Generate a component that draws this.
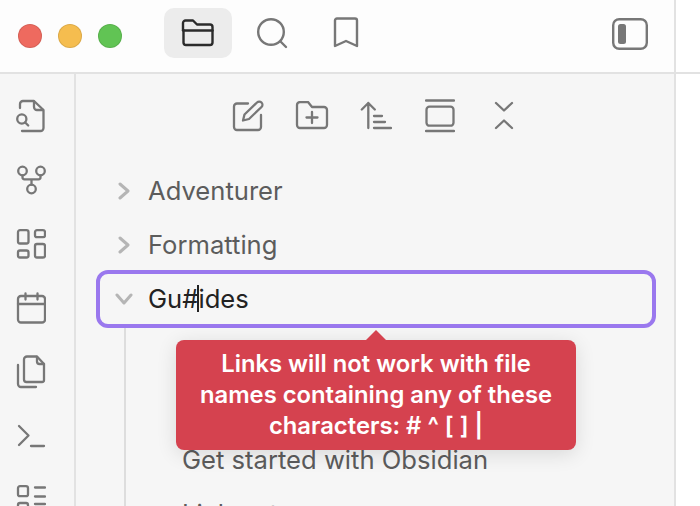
<div class="app">
	<header class="titlebar">
		<div class="traffic">
			<span class="dot red"></span>
			<span class="dot yellow"></span>
			<span class="dot green"></span>
		</div>
		<div class="tabs">
			<button class="tab active" aria-label="Files">
				<svg width="34" height="30" viewBox="0 0 34 30" fill="none" stroke="#2b2b2b" stroke-width="2.4" stroke-linejoin="round" stroke-linecap="round">
					<path d="M2 12V5a2.500 2.500 0 0 1 2.500-2.500h7.500l4 4h13a2.500 2.500 0 0 1 2.500 2.500v15.500a2.500 2.500 0 0 1-2.500 2.500h-24a2.500 2.500 0 0 1-2.500-2.500V12" />
					<path d="M2 12.500h29.500" />
				</svg>
			</button>
			<button class="tab" aria-label="Search">
				<svg width="34" height="34" viewBox="0 0 34 34" fill="none" stroke="#777" stroke-width="2.400" stroke-linecap="round">
					<circle cx="16" cy="16" r="12.800" />
					<path d="M25.500 25.500l5.500 5.500" />
				</svg>
			</button>
			<button class="tab" aria-label="Bookmarks">
				<svg width="28" height="34" viewBox="0 0 28 34" fill="none" stroke="#777" stroke-width="2.400" stroke-linejoin="round" stroke-linecap="round">
					<path d="M3 4.500a2 2 0 0 1 2-2h18a2 2 0 0 1 2 2V30l-11-5-11 5z" />
				</svg>
			</button>
		</div>
		<button class="sidebar-toggle" aria-label="Toggle sidebar">
			<svg width="36" height="34" viewBox="0 0 36 34" fill="none">
				<rect x="1.200" y="2.200" width="33.600" height="29.600" rx="6" stroke="#777" stroke-width="2.400" />
				<rect x="6" y="7" width="8" height="20" rx="2.500" fill="#777" />
			</svg>
		</button>
		<div class="edge"></div>
	</header>

	<div class="body">
		<nav class="ribbon">
			<div class="ribbon-item">
				<svg width="30" height="34" viewBox="0 0 30 34" fill="none" stroke="#777" stroke-width="2.300" stroke-linecap="round" stroke-linejoin="round">
					<path d="M4 9V5a3 3 0 0 1 3-3h11l9.500 9v18a3 3 0 0 1-3 3H6" />
					<path d="M18 2.500V8a3 3 0 0 0 3 3h6" />
					<circle cx="5.800" cy="20" r="4.600" />
					<path d="M9.200 23.500l3 3" />
				</svg>
			</div>
			<div class="ribbon-item">
				<svg width="30" height="30" viewBox="0 0 30 30" fill="none" stroke="#777" stroke-width="2.300" stroke-linecap="round" stroke-linejoin="round">
					<circle cx="6.500" cy="6" r="4.300" />
					<circle cx="24.500" cy="6" r="4.300" />
					<circle cx="15.500" cy="24" r="4.300" />
					<path d="M6.500 10.300v2a2 2 0 0 0 2 2h14a2 2 0 0 0 2-2v-2 M15.500 14.300v5.500" />
				</svg>
			</div>
			<div class="ribbon-item">
				<svg width="30" height="30" viewBox="0 0 30 30" fill="none" stroke="#777" stroke-width="2.300" stroke-linejoin="round">
					<rect x="2" y="1.200" width="10.500" height="13.300" rx="2" />
					<rect x="19" y="1.200" width="10" height="7" rx="2" />
					<rect x="19" y="15" width="10" height="13.500" rx="2" />
					<rect x="2" y="21.500" width="10.500" height="7" rx="2" />
				</svg>
			</div>
			<div class="ribbon-item">
				<svg width="30" height="32" viewBox="0 0 30 32" fill="none" stroke="#777" stroke-width="2.300" stroke-linecap="round" stroke-linejoin="round">
					<rect x="2" y="4" width="27" height="26.500" rx="3" />
					<path d="M2 12h27 M9.500 1.500v6 M21.500 1.500v6" />
				</svg>
			</div>
			<div class="ribbon-item">
				<svg width="30" height="34" viewBox="0 0 30 34" fill="none" stroke="#777" stroke-width="2.300" stroke-linecap="round" stroke-linejoin="round">
					<path d="M8 4.500v20a2.500 2.500 0 0 0 2.500 2.500h15.500a2 2 0 0 0 2-2V9l-7-7.500H11a3 3 0 0 0-3 3z" />
					<path d="M21 2v4.500a2.500 2.500 0 0 0 2.500 2.500h4.500" />
					<path d="M2 10v19a3 3 0 0 0 3 3h15" />
				</svg>
			</div>
			<div class="ribbon-item">
				<svg width="30" height="24" viewBox="0 0 30 24" fill="none" stroke="#777" stroke-width="2.300" stroke-linecap="round" stroke-linejoin="round">
					<path d="M3 2l9.500 9.500L3 21 M15 22h13" />
				</svg>
			</div>
			<div class="ribbon-item">
				<svg width="30" height="30" viewBox="0 0 30 30" fill="none" stroke="#777" stroke-width="2.300" stroke-linecap="round" stroke-linejoin="round">
					<rect x="2" y="1.200" width="10" height="10" rx="2" />
					<rect x="2" y="18" width="10" height="10" rx="2" />
					<path d="M19 2.500h10 M19 11.500h10 M19 19h10 M19 27h10" />
				</svg>
			</div>
		</nav>

		<main class="pane">
			<div class="toolbar">
				<span class="tool">
					<svg width="32" height="32" viewBox="0 0 32 32" fill="none" stroke="#777" stroke-width="2.300" stroke-linecap="round" stroke-linejoin="round">
						<path d="M16 3.500H5a3 3 0 0 0-3 3V27a3 3 0 0 0 3 3h21a3 3 0 0 0 3-3V15" />
						<path d="M11 20.500l1.500-6L25 2.500a2.500 2.500 0 0 1 4.500 4.500L17 19z" />
					</svg>
				</span>
				<span class="tool">
					<svg width="34" height="30" viewBox="0 0 34 30" fill="none" stroke="#777" stroke-width="2.300" stroke-linecap="round" stroke-linejoin="round">
						<path d="M2 4a3 3 0 0 1 3-3h8l4 5h12a3 3 0 0 1 3 3v15a3 3 0 0 1-3 3H5a3 3 0 0 1-3-3z" />
						<path d="M17 11v11 M11.500 16.500h11" />
					</svg>
				</span>
				<span class="tool">
					<svg width="32" height="30" viewBox="0 0 32 30" fill="none" stroke="#777" stroke-width="2.300" stroke-linecap="round" stroke-linejoin="round">
						<path d="M8.300 27V2 M1.800 8.500L8.300 2l6.500 6.500 M14 15h8 M14 21h11 M14 27h17" />
					</svg>
				</span>
				<span class="tool">
					<svg width="30" height="34" viewBox="0 0 30 34" fill="none" stroke="#777" stroke-width="2.300" stroke-linecap="round" stroke-linejoin="round">
						<path d="M1 1.500h28 M1 32h28" />
						<rect x="1.500" y="7.700" width="27" height="19" rx="3" />
					</svg>
				</span>
				<span class="tool">
					<svg width="22" height="30" viewBox="0 0 22 30" fill="none" stroke="#777" stroke-width="2.300" stroke-linecap="round" stroke-linejoin="round">
						<path d="M3 2l8 7.500L19 2 M3 27l8-7.500 8 7.500" />
					</svg>
				</span>
			</div>

			<div class="tree">
				<div class="row">
					<svg class="chev" width="14" height="18" viewBox="0 0 14 18" fill="none" stroke="#b5b5b5" stroke-width="3" stroke-linecap="round" stroke-linejoin="round"><path d="M3 2l8 7-8 7" /></svg>
					<span>Adventurer</span>
				</div>
				<div class="row">
					<svg class="chev" width="14" height="18" viewBox="0 0 14 18" fill="none" stroke="#b5b5b5" stroke-width="3" stroke-linecap="round" stroke-linejoin="round"><path d="M3 2l8 7-8 7" /></svg>
					<span>Formatting</span>
				</div>
				<div class="row editing">
					<svg class="chev open" width="18" height="14" viewBox="0 0 18 14" fill="none" stroke="#b5b5b5" stroke-width="3" stroke-linecap="round" stroke-linejoin="round"><path d="M2 3l7 8 7-8" /></svg>
					<span class="input">Gu#<i class="caret"></i>ides</span>
				</div>
				<div class="children">
					<div class="child">Get started with Obsidian</div>
					<div class="child">Link notes</div>
				</div>
				<div class="tooltip">
					Links will not work with file names containing any of these characters: # ^ [ ] |
				</div>
			</div>
		</main>
		<div class="edge"></div>
	</div>
</div>

<style>
	:global(body) {
		margin: 0;
		background: #fff;
		overflow: hidden;
	}

	.app {
		width: 700px;
		height: 506px;
		overflow: hidden;
		display: flex;
		flex-direction: column;
		font-family: Inter, "Liberation Sans", sans-serif;
	}

	.titlebar {
		height: 72px;
		flex: none;
		display: flex;
		align-items: center;
		background: #fdfdfd;
		border-bottom: 2px solid #e2e2e2;
	}

	.traffic {
		display: flex;
		gap: 16px;
		margin-left: 18px;
		width: 146px;
	}

	.dot {
		width: 24px;
		height: 24px;
		box-sizing: border-box;
		border-radius: 50%;
		border: 1px solid rgba(0, 0, 0, 0.1);
	}

	.red {
		background: #ee6a5f;
	}

	.yellow {
		background: #f5bd4f;
	}

	.green {
		background: #61c454;
	}

	.tabs {
		display: flex;
		align-items: center;
		gap: 6px;
		margin-top: -6px;
	}

	.tab {
		width: 68px;
		height: 50px;
		padding: 0;
		border: 0;
		border-radius: 10px;
		background: none;
		display: flex;
		align-items: center;
		justify-content: center;
	}

	.tab.active {
		background: #ececec;
	}

	.sidebar-toggle {
		margin-left: auto;
		margin-right: 26px;
		margin-top: -4px;
		padding: 0;
		border: 0;
		background: none;
		display: flex;
	}

	.edge {
		width: 24px;
		flex: none;
		align-self: stretch;
		background: #fff;
		border-left: 2px solid #e2e2e2;
	}

	.body {
		flex: 1;
		display: flex;
		min-height: 0;
	}

	.ribbon {
		width: 76px;
		flex: none;
		box-sizing: border-box;
		background: #f6f6f6;
		border-right: 2px solid #e2e2e2;
		padding: 10px 13px 0 0;
		overflow: hidden;
	}

	.ribbon-item {
		height: 64px;
		display: flex;
		align-items: center;
		justify-content: center;
	}

	.pane {
		flex: 1;
		min-width: 0;
		background: #f6f6f6;
	}

	.toolbar {
		display: flex;
		align-items: center;
		justify-content: center;
		height: 84px;
		padding-left: 2px;
	}

	.tool {
		width: 64px;
		display: flex;
		justify-content: center;
	}

	.tree {
		position: relative;
		padding: 6px 18px 0 20px;
	}

	.row {
		height: 54px;
		display: flex;
		align-items: center;
		font-size: 25.6px;
		color: #5c5c5c;
	}

	.row span {
		margin: -2px 0 0 17px;
	}

	.chev {
		margin-left: 21px;
	}

	.row.editing {
		height: 58px;
		box-sizing: border-box;
		border: 4px solid #9a78ee;
		border-radius: 12px;
		color: #222;
		margin-top: -2px;
	}

	.chev.open {
		margin-left: 15px;
	}

	.row .input {
		margin-left: 15px;
		display: inline-flex;
		align-items: center;
	}

	.caret {
		display: inline-block;
		width: 2px;
		height: 27px;
		background: #222;
		margin: 0 -1px;
	}

	.children {
		margin-left: 28px;
		border-left: 2px solid #ddd;
		padding: 105px 0 0 56px;
		font-size: 25.6px;
		color: #5c5c5c;
	}

	.child {
		height: 54px;
		line-height: 54px;
		white-space: nowrap;
	}

	.tooltip {
		position: absolute;
		top: 182px;
		left: 100px;
		width: 400px;
		height: 110px;
		box-sizing: border-box;
		padding: 8px 20px 0;
		background: #d5424f;
		border-radius: 8px;
		color: #fff;
		font-size: 23.8px;
		font-weight: 600;
		line-height: 31px;
		text-align: center;
		box-shadow: 0 4px 20px rgba(0, 0, 0, 0.12);
	}

	.tooltip::before {
		content: "";
		position: absolute;
		top: -10px;
		left: 190px;
		width: 20px;
		height: 10px;
		background: #d5424f;
		clip-path: polygon(50% 0, 100% 100%, 0 100%);
	}
</style>
